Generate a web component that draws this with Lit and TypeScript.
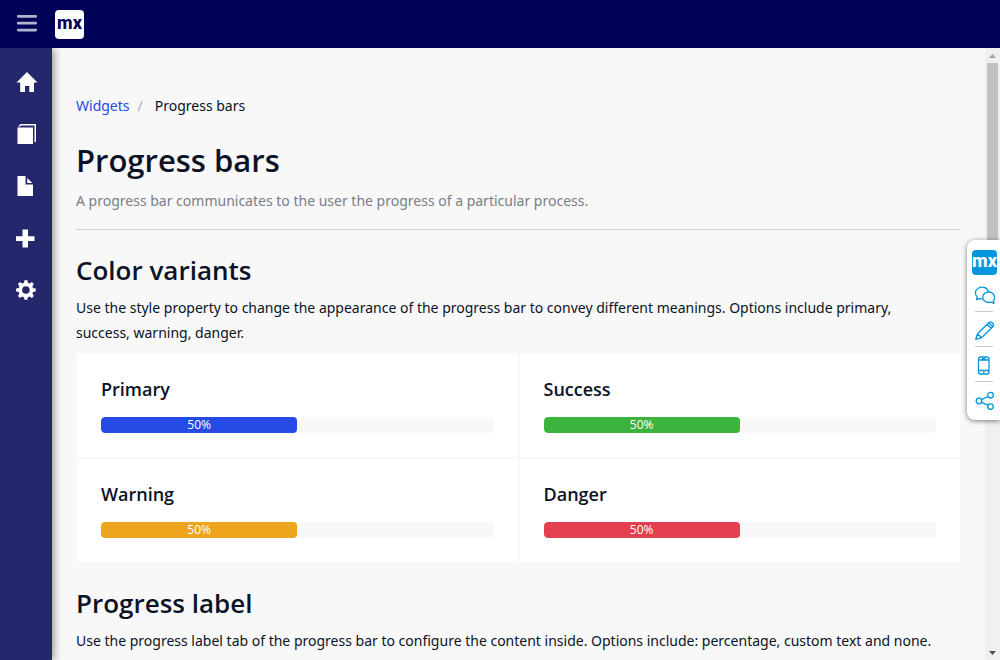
import { LitElement, html, css, svg } from "lit";
import { customElement, property } from "lit/decorators.js";

@customElement("progress-card")
class ProgressCard extends LitElement {
  @property() label = "";
  @property() variant = "primary";
  @property({ type: Number }) value = 0;

  static styles = css`
    :host {
      display: block;
      box-sizing: border-box;
      border: 1px solid #f8f8f8;
      background: #fff;
      padding: 24px;
    }
    .title {
      margin: 0 0 16px;
      font-size: 18px;
      line-height: 23px;
      font-weight: 600;
    }
    .track {
      height: 16px;
      border-radius: 4px;
      background: #f8f8f8;
      overflow: hidden;
    }
    .bar {
      height: 16px;
      border-radius: 4px;
      color: #fff;
      font-size: 12px;
      line-height: 16px;
      text-align: center;
    }
    .primary { background: #264ae5; }
    .success { background: #3cb33d; }
    .warning { background: #eca51c; }
    .danger { background: #e33f4e; }
  `;

  render() {
    return html`
      <h4 class="title">${this.label}</h4>
      <div class="track" role="progressbar" aria-label=${this.label}
        aria-valuemin="0" aria-valuemax="100" aria-valuenow=${this.value}>
        <div class="bar ${this.variant}" style="width:${this.value}%">${this.value}%</div>
      </div>
    `;
  }
}

const navIcons = [
  { name: "Home", art: svg`<path d="M11 1 21.500 11.500H18V21H13.300V15H9V21H4.200V11.500H.5Z"/>` },
  { name: "Pages", art: svg`<path d="M1.500 4.500V21H17V4.500ZM2 3.500 4.500 1H20V18.500L18.500 19.500V2.500H5L4 3.500Z"/>` },
  { name: "Document", art: svg`<path d="M1.500 1H9.500V9.500H17V21H1.500ZM11.200 3 16.300 8H11.200Z"/>` },
  { name: "Add", art: svg`<path d="M6.500 2.500H12V9.200H18.500V14H12V20.500H6.500V14H0V9.200H6.500Z"/>` },
  {
    name: "Settings",
    art: svg`<g transform="translate(9.900 11)">
      <circle r="5.600" fill="none" stroke="#fff" stroke-width="3.600"/>
      ${[0, 45, 90, 135, 180, 225, 270, 315].map(
        (a) => svg`<path transform="rotate(${a})" d="M-2.100-6.500-1.400-9.800H1.400L2.100-6.500Z"/>`
      )}
    </g>`,
  },
];

const toolIcons = [
  {
    name: "Feedback",
    art: svg`<path d="M7.500 12.800C6.500 13 5.300 13 4.500 12.600L1.500 13.600 2.300 11.300C-.5 8-.2 4.500 2.800 2.500 6.500.2 12 1 13.300 5.500"/>
      <path d="M13.800 6C10.500 6 7.700 8.300 7.700 11.200S10.500 16.500 13.800 16.500C14.700 16.500 15.600 16.400 16.300 16.100L19 17.400 18.300 15C20.500 12.500 20 8.800 17.300 7 16.300 6.300 15.100 6 13.800 6Z"/>`,
  },
  {
    name: "Edit",
    art: svg`<path d="M.8 18.300 2.500 12.800 14 1.500Q15.500.2 17 1.500L18 2.500Q19.200 4 18 5.500L6.500 16.800ZM2.500 12.800 6.500 16.800M12.200 3.300 16.200 7.300M13.800 1.800 17.800 5.800"/>`,
  },
  {
    name: "Phone preview",
    art: svg`<rect x="3.500" y="1" width="10.500" height="17" rx="2"/><path d="M3.500 4H14M3.500 14.500H14M7 2.500H10.500M8 16.400H9.500"/>`,
  },
  {
    name: "Share",
    art: svg`<circle cx="4" cy="10" r="2.800"/><circle cx="15.500" cy="4.200" r="2.800"/><circle cx="15.500" cy="15.600" r="2.800"/><path d="M6.600 8.700 13 5.500M6.600 11.300 13 14.400"/>`,
  },
];

const variants = [
  ["Primary", "primary"],
  ["Success", "success"],
  ["Warning", "warning"],
  ["Danger", "danger"],
];

@customElement("app-root")
class AppRoot extends LitElement {
  static styles = css`
    :host {
      display: flex;
      flex-direction: column;
      height: 100vh;
      position: relative;
      overflow: hidden;
      background: #f8f8f8;
      color: #0a1325;
      font-family: "Open Sans", sans-serif;
      font-size: 14px;
    }
    * { box-sizing: border-box; }
    svg { display: block; overflow: visible; }
    button {
      border: 0;
      padding: 0;
      background: none;
      cursor: pointer;
    }
    .topbar {
      flex: none;
      display: flex;
      align-items: center;
      gap: 17px;
      height: 48px;
      padding: 0 16px;
      background: #000257;
    }
    .brand,
    .mx {
      display: flex;
      justify-content: center;
      border-radius: 4px;
      text-decoration: none;
      font-family: Roboto, "Open Sans", sans-serif;
      font-size: 18px;
      font-weight: 800;
    }
    .brand {
      width: 29px;
      height: 29px;
      background: #fff;
      color: #000257;
      line-height: 26px;
    }
    .mx {
      width: 25px;
      height: 25px;
      margin-bottom: 2px;
      background: #0595db;
      color: #fff;
      line-height: 22px;
      overflow: hidden;
    }
    .body {
      flex: 1;
      min-height: 0;
      display: flex;
    }
    .sidebar {
      flex: none;
      width: 52px;
      padding-top: 8px;
      background: #24276c;
      box-shadow: 2px 0 8px rgba(0, 0, 0, 0.4);
      z-index: 1;
      clip-path: inset(0 -16px 0 0);
    }
    .navitem {
      display: flex;
      align-items: center;
      height: 52px;
      padding-left: 16px;
    }
    .page {
      flex: 1;
      min-width: 0;
      overflow: hidden;
      padding: 48px 24px;
    }
    .crumbs,
    .lead,
    .text { font-family: "Noto Sans", "Open Sans", sans-serif; }
    .crumbs {
      display: flex;
      line-height: 20px;
    }
    .crumbs a { color: #264ae5; text-decoration: none; }
    .slash { padding: 0 12px 0 8px; color: #a9acb3; }
    h1 {
      margin: 24px 0 8px;
      font-size: 31px;
      line-height: 40px;
      font-weight: 600;
    }
    h2 {
      margin: 23px 0 8px;
      font-size: 26px;
      line-height: 34px;
      font-weight: 600;
    }
    .lead {
      margin: 0;
      padding-bottom: 16px;
      border-bottom: 1px solid #ced0d3;
      line-height: 25px;
      color: #787d87;
    }
    .text { max-width: 860px; margin: 0 0 8px; line-height: 25px; }
    .cards {
      display: grid;
      grid-template-columns: 1fr 1fr;
    }
    .scrollbar {
      flex: none;
      display: flex;
      flex-direction: column;
      align-items: center;
      width: 15px;
      background: #f0f0f0;
    }
    .arrow { height: 15px; display: flex; align-items: center; }
    .rail { flex: 1; width: 11px; }
    .thumb { height: 33%; background: #c1c1c1; }
    .tools {
      position: absolute;
      right: 0;
      top: 240px;
      width: 33px;
      padding: 10px 2px 4px 5px;
      border-radius: 8px 0 0 8px;
      background: #fff;
      box-shadow: 0 1px 5px rgba(0, 0, 0, 0.5);
      z-index: 2;
    }
    .tool {
      display: flex;
      align-items: center;
      justify-content: center;
      width: 26px;
      height: 34px;
      padding-top: 4px;
    }
    .rule { width: 18px; height: 1px; margin-left: 3px; background: #ccc; }
  `;

  render() {
    return html`
      <header class="topbar">
        <button aria-label="Toggle menu">
          <svg width="22" height="20" viewBox="0 0 22 20"><path d="M2.300 2.300H19.700M2.300 9.200H19.700M2.300 16.100H19.700" stroke="#b2b3cd" stroke-width="2.800" stroke-linecap="round"/></svg>
        </button>
        <a class="brand" href="#" aria-label="Mendix home">mx</a>
      </header>
      <div class="body">
        <nav class="sidebar">
          ${navIcons.map((i) => html`<a class="navitem" href="#" aria-label=${i.name}>
            <svg width="22" height="22" viewBox="0 0 22 22" fill="#fff">${i.art}</svg></a>`)}
        </nav>
        <main class="page">
          <nav class="crumbs"><a href="#">Widgets</a><span class="slash">/</span><span>Progress bars</span></nav>
          <h1>Progress bars</h1>
          <p class="lead">A progress bar communicates to the user the progress of a particular process.</p>
          <h2>Color variants</h2>
          <p class="text">Use the style property to change the appearance of the progress bar to convey different meanings. Options include primary, success, warning, danger.</p>
          <section class="cards">
            ${variants.map(([label, v]) => html`<progress-card label=${label} variant=${v} value="50"></progress-card>`)}
          </section>
          <h2>Progress label</h2>
          <p class="text">Use the progress label tab of the progress bar to configure the content inside. Options include: percentage, custom text and none.</p>
        </main>
        <div class="scrollbar" aria-hidden="true">
          <div class="arrow"><svg width="7" height="4"><path d="M0 4 3.500 0 7 4Z" fill="#a3a3a3"/></svg></div>
          <div class="rail"><div class="thumb"></div></div>
          <div class="arrow"><svg width="7" height="4"><path d="M0 0H7L3.500 4Z" fill="#505050"/></svg></div>
        </div>
      </div>
      <aside class="tools">
        <div class="mx">mx</div>
        ${toolIcons.map((t, i) => html`
          ${i ? html`<div class="rule"></div>` : ""}
          <button class="tool" aria-label=${t.name}>
            <svg width="20" height="20" viewBox="0 0 20 20" fill="none" stroke="#0595db" stroke-width="1.300" stroke-linejoin="round">${t.art}</svg>
          </button>`)}
      </aside>
    `;
  }
}
